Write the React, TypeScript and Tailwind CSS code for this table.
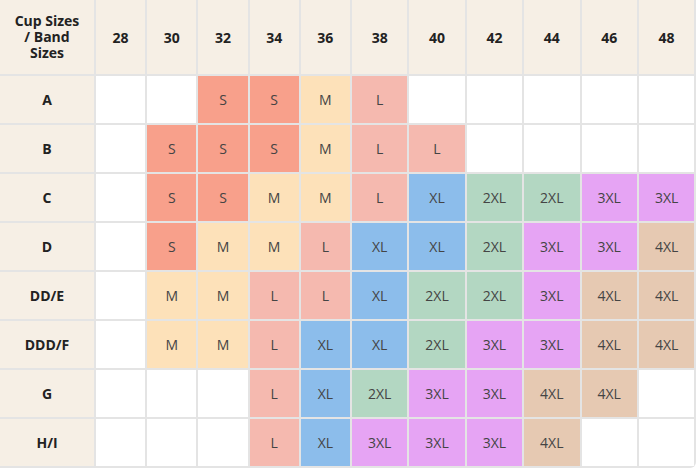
import React from 'react';

const bands = ['28', '30', '32', '34', '36', '38', '40', '42', '44', '46', '48'];

const rows: { cup: string; sizes: string[] }[] = [
  { cup: 'A', sizes: ['', '', 'S', 'S', 'M', 'L', '', '', '', '', ''] },
  { cup: 'B', sizes: ['', 'S', 'S', 'S', 'M', 'L', 'L', '', '', '', ''] },
  { cup: 'C', sizes: ['', 'S', 'S', 'M', 'M', 'L', 'XL', '2XL', '2XL', '3XL', '3XL'] },
  { cup: 'D', sizes: ['', 'S', 'M', 'M', 'L', 'XL', 'XL', '2XL', '3XL', '3XL', '4XL'] },
  { cup: 'DD/E', sizes: ['', 'M', 'M', 'L', 'L', 'XL', '2XL', '2XL', '3XL', '4XL', '4XL'] },
  { cup: 'DDD/F', sizes: ['', 'M', 'M', 'L', 'XL', 'XL', '2XL', '3XL', '3XL', '4XL', '4XL'] },
  { cup: 'G', sizes: ['', '', '', 'L', 'XL', '2XL', '3XL', '3XL', '4XL', '4XL', ''] },
  { cup: 'H/I', sizes: ['', '', '', 'L', 'XL', '3XL', '3XL', '3XL', '4XL', '', ''] },
];

// fill colour per size
const sizeColor: Record<string, string> = {
  '': 'bg-white',
  S: 'bg-[#f8a08b]',
  M: 'bg-[#fde1b9]',
  L: 'bg-[#f5b9af]',
  XL: 'bg-[#8cbdeb]',
  '2XL': 'bg-[#b3d7c2]',
  '3XL': 'bg-[#e6a4f4]',
  '4XL': 'bg-[#e6c9b2]',
};

const App: React.FC = () => {
  return (
    <div className="w-[696px] h-[468px] bg-white overflow-hidden font-['Open_Sans',sans-serif]">
      <div className="grid grid-cols-[94px_repeat(5,49.2px)_repeat(6,55.4px)] grid-rows-[74px_repeat(8,47px)] gap-[2px] bg-[#e4e4e4] border-r-2 border-b-2 border-[#e4e4e4] rounded-br-md w-[696px]">
        {/* header row */}
        <div className="bg-[#f6efe5] flex flex-col items-center justify-center text-center text-[14px] leading-[16px] font-bold text-[#222]">
          <span>Cup Sizes</span>
          <span>/ Band</span>
          <span>Sizes</span>
        </div>
        {bands.map(b => (
          <div key={b} className="bg-[#f6efe5] flex items-center justify-center text-[14px] font-bold text-[#222]">
            {b}
          </div>
        ))}

        {rows.map(r => (
          <React.Fragment key={r.cup}>
            <div className="bg-[#f6efe5] flex items-center justify-center text-[14px] font-bold text-[#222]">
              {r.cup}
            </div>
            {r.sizes.map((s, i) => (
              <div key={i} className={`${sizeColor[s]} flex items-center justify-center text-[14px] text-[#444]`}>
                {s}
              </div>
            ))}
          </React.Fragment>
        ))}
      </div>
    </div>
  );
};

export default App;
